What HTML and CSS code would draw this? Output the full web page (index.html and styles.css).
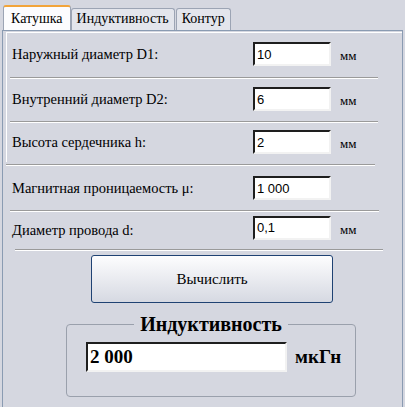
FILE: index.html
```html
<!DOCTYPE html>
<html lang="ru">
<head>
  <meta charset="UTF-8" />
  <title>Катушка</title>
  <link rel="stylesheet" href="styles.css">
</head>
<body>
  <div class="tabs">
    <div class="tab active">Катушка</div>
    <div class="tab">Индуктивность</div>
    <div class="tab">Контур</div>
  </div>

  <div class="panel">
    <div class="frame">
      <div class="row r1">
        <span class="label">Наружный диаметр D1:</span>
        <input class="field" value="10">
        <span class="unit">мм</span>
      </div>
      <div class="sep sep-frame"></div>
      <div class="row r2">
        <span class="label">Внутренний диаметр D2:</span>
        <input class="field" value="6">
        <span class="unit">мм</span>
      </div>
      <div class="sep sep-frame"></div>
      <div class="row r3">
        <span class="label">Высота сердечника h:</span>
        <input class="field" value="2">
        <span class="unit">мм</span>
      </div>
    </div>
    <div class="sep sep-a"></div>
    <div class="row r4">
      <span class="label">Магнитная проницаемость μ:</span>
      <input class="field" value="1 000">
    </div>
    <div class="sep sep-b"></div>
    <div class="row r5">
      <span class="label">Диаметр провода d:</span>
      <input class="field" value="0,1">
      <span class="unit">мм</span>
    </div>
    <div class="sep sep-c"></div>

    <div class="actions">
      <button class="calc-btn">Вычислить</button>
    </div>

    <fieldset class="result">
      <legend>Индуктивность</legend>
      <div class="result-row">
        <input class="result-field" value="2 000">
        <span class="result-unit">мкГн</span>
      </div>
    </fieldset>
  </div>
</body>
</html>
```

FILE: styles.css
```css
* { box-sizing: border-box; }
body {
  margin: 0;
  height: 407px;
  overflow: hidden;
  background: #d5d7e0;
  font-family: 'Liberation Serif', 'DejaVu Serif', serif;
  color: #000;
}

/* tab strip */
.tabs {
  display: flex;
  align-items: flex-end;
  height: 30px;
  padding-left: 3px;
}

.tab {
  height: 22px;
  padding: 0 5px;
  margin-right: 1px;
  font-size: 14px;
  line-height: 20px;
  background: #e3e5ec;
  border: 1px solid #9ca4b4;
  border-bottom: none;
  border-radius: 3px 3px 0 0;
}

.tab.active {
  height: 25px;
  padding: 0 7px;
  line-height: 23px;
  background: #fcfcfe;
  border-top: 2px solid #f2a43a;
  margin-right: 0;
}

/* page body */
.panel {
  margin: 0 2px;
  height: 377px;
  border: 1px solid #8a9bb2;
  border-bottom: none;
}

.frame {
  margin: 1px 0 0 3px;
  border-top: 1px solid #fff;
  border-left: 1px solid #fff;
}

.row {
  display: flex;
  align-items: center;
  padding-left: 9px;
}

.frame .row { padding-left: 5px; }

.r1 { height: 44px; padding-bottom: 2px; }
.r2 { height: 42px; padding-bottom: 2px; }
.r3 { height: 39px; padding-bottom: 1px; }
.r4 { height: 44px; }
.r5 { height: 37px; padding-bottom: 6px; }
.r5 .label { margin-top: 6px; }

.sep {
  height: 2px;
  border-top: 1px solid #9a9a9a;
  border-bottom: 1px solid #fff;
}

.sep-frame { margin: 0 24px 0 3px; }
.sep-a { margin: 2px 27px 0 3px; }
.sep-b { margin: 0 23px 0 7px; }
.sep-c { margin: 0 19px 0 12px; }

.label {
  width: 241px;
  font-size: 14.5px;
}

.field {
  width: 78px;
  height: 24px;
  padding: 0 2px;
  font: 13px 'Liberation Sans', sans-serif;
  background: #fff;
  border: 2px solid;
  border-color: #1e1e1e #f2f2f2 #f2f2f2 #1e1e1e;
}

.unit {
  margin: 4px 0 0 9px;
  font-size: 13px;
}

.actions {
  display: flex;
  padding: 4px 0 0 88px;
}

.calc-btn {
  width: 242px;
  height: 48px;
  font: 15px 'Liberation Serif', 'DejaVu Serif', serif;
  background: linear-gradient(#fdfdfe, #d6d9e2);
  border: 1px solid #1f4273;
  border-radius: 3px;
}

/* result group */
.result {
  width: 290px;
  height: 82px;
  margin: 12px 0 0 63px;
  padding: 0;
  border: 1px solid #9aa0ac;
  border-radius: 4px;
}

.result legend {
  margin: 0 auto;
  padding: 0 6px;
  font-weight: bold;
  font-size: 20px;
  line-height: 18px;
}

.result-row {
  display: flex;
  align-items: center;
  margin-top: 9px;
  padding-left: 19px;
}

.result-field {
  width: 201px;
  height: 30px;
  padding: 0 2px;
  font: bold 19px 'Liberation Serif', 'DejaVu Serif', serif;
  background: #fff;
  border: 2px solid;
  border-color: #1e1e1e #f2f2f2 #f2f2f2 #1e1e1e;
}

.result-unit {
  margin-left: 8px;
  font-weight: bold;
  font-size: 19px;
}
```
